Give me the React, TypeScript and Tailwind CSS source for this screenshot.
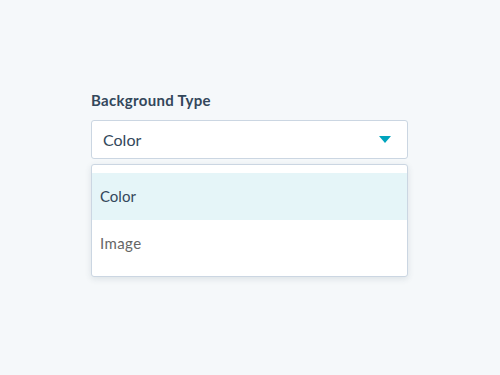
import { useState } from 'react';

const options = ['Color', 'Image'];

export default function App() {
  const [value, setValue] = useState('Color');

  return (
    <div className="min-h-[375px] w-full bg-[#f5f8fa] font-['Lato',sans-serif]">
      <div className="pl-[91px] pt-[91px] w-[408px]">
        {/* label */}
        <label className="block text-[15px] font-bold text-[#33475b] leading-[18px] mb-[11px] tracking-[0.3px]">
          Background Type
        </label>

        {/* select */}
        <button className="w-full h-[39px] flex items-center justify-between px-[11px] bg-white border border-[#cbd6e2] rounded-[3px] text-[16px] text-[#33475b] text-left">
          <span>{value}</span>
          <svg width="12" height="7" viewBox="0 0 12 7" className="mr-[5px]">
            <path d="M0 0 H12 L6 7 Z" fill="#00a4bd" />
          </svg>
        </button>

        {/* menu */}
        <div className="mt-[5px] bg-white border border-[#cbd6e2] rounded-[3px] shadow-[0_2px_6px_rgba(45,62,80,0.12)] pt-[8px] pb-[9px]">
          {options.map((opt) => (
            <div
              key={opt}
              onClick={() => setValue(opt)}
              className={
                opt === value
                  ? 'h-[47px] flex items-center px-[8px] bg-[#e5f5f8] text-[15px] text-[#33475b]'
                  : 'h-[47px] flex items-center px-[8px] text-[15px] text-[#666666] tracking-[0.4px]'
              }
            >
              {opt}
            </div>
          ))}
        </div>
      </div>
    </div>
  );
}
